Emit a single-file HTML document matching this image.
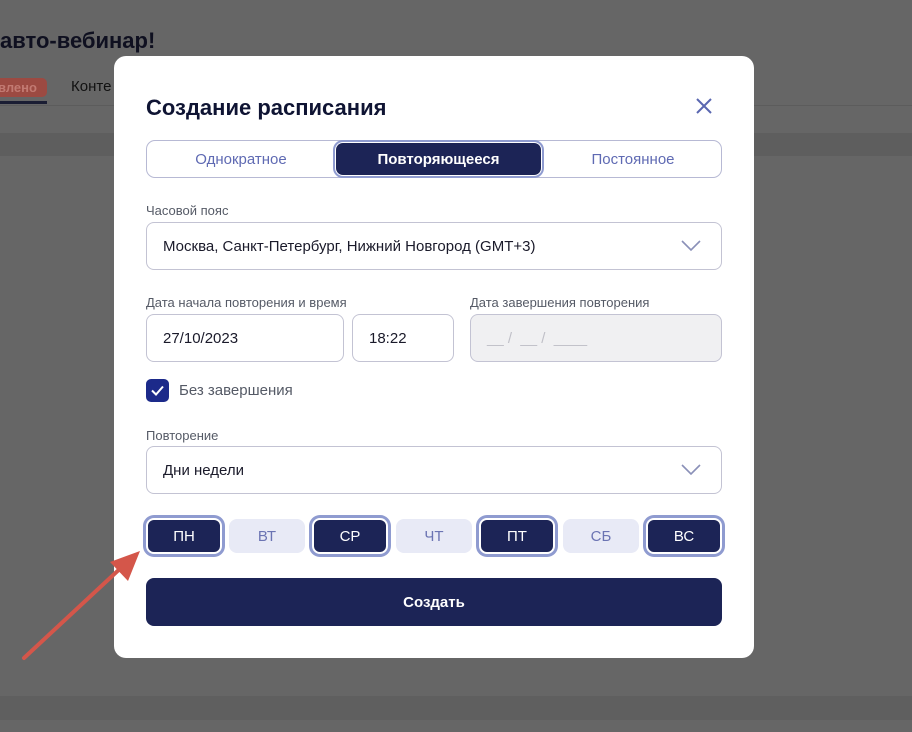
<!DOCTYPE html>
<html><head><meta charset="utf-8"><style>
*{box-sizing:border-box;margin:0;padding:0}
body{width:912px;height:732px;background:#666;font-family:"Liberation Sans",sans-serif;position:relative;overflow:hidden}
.a{position:absolute}
.lbl{position:absolute;font-size:13px;color:#555a66}
.inp{position:absolute;border:1px solid #c3c3d3;border-radius:8px;background:#fff;font-size:15px;color:#1a1a2a;display:flex;align-items:center;padding-left:16px}
.day{position:absolute;top:518px;width:76px;height:36px;border-radius:8px;display:flex;align-items:center;justify-content:center;font-size:15px}
.on{background:#1c2456;color:#fff;box-shadow:0 0 0 1px #1c2456 inset,0 0 0 3px #8f9bd0;border:2px solid #fff;outline:none}
.off{background:#e8eaf6;color:#6b74b3;top:519px;height:34px}
.chev{position:absolute;right:20px;top:50%;margin-top:-6px}
</style></head><body>
<div class="a" style="left:0;top:28px;font-size:22px;font-weight:bold;color:#0f1020">авто-вебинар!</div>
<div class="a" style="left:-10px;top:78px;width:57px;height:19px;background:#9c4a42;border-radius:5px;color:#c27a72;font-size:13px;font-weight:bold;padding-left:8px;line-height:19px">влено</div>
<div class="a" style="left:71px;top:78px;font-size:15px;color:#111">Конте</div>
<div class="a" style="left:0;top:101px;width:47px;height:3px;background:#1a1d33"></div>
<div class="a" style="left:0;top:105px;width:912px;height:1px;background:#5c5c5c"></div>
<div class="a" style="left:0;top:133px;width:912px;height:23px;background:#5e5e5e"></div>
<div class="a" style="left:0;top:696px;width:912px;height:24px;background:#5f5f5f"></div>

<div class="a" style="left:114px;top:56px;width:640px;height:602px;background:#fff;border-radius:12px"></div>
<div class="a" style="left:146px;top:95px;font-size:22px;font-weight:bold;color:#0f1433">Создание расписания</div>
<svg class="a" style="left:694px;top:96px" width="20" height="20" viewBox="0 0 20 20"><path d="M3 3L17 17M17 3L3 17" stroke="#5a67b0" stroke-width="2"/></svg>

<div class="a" style="left:146px;top:140px;width:576px;height:38px;border:1px solid #b7b9d4;border-radius:9px"></div>
<div class="a" style="left:146px;top:140px;width:190px;height:38px;display:flex;align-items:center;justify-content:center;font-size:15px;color:#5f6ab3">Однократное</div>
<div class="a" style="left:333px;top:140px;width:211px;height:38px;border:2px solid #8f9bd0;border-radius:10px;background:#fff;padding:1px"><div style="width:100%;height:100%;background:#1c2456;border-radius:7px;color:#fff;font-size:15px;font-weight:bold;display:flex;align-items:center;justify-content:center">Повторяющееся</div></div>
<div class="a" style="left:544px;top:140px;width:178px;height:38px;display:flex;align-items:center;justify-content:center;font-size:15px;color:#5f6ab3">Постоянное</div>

<div class="lbl" style="left:146px;top:203px">Часовой пояс</div>
<div class="inp" style="left:146px;top:222px;width:576px;height:48px">Москва, Санкт-Петербург, Нижний Новгород (GMT+3)<svg class="chev" width="20" height="12" viewBox="0 0 20 12"><path d="M1 1L10 10L19 1" fill="none" stroke="#8a90b8" stroke-width="1.6"/></svg></div>

<div class="lbl" style="left:146px;top:295px">Дата начала повторения и время</div>
<div class="lbl" style="left:470px;top:295px">Дата завершения повторения</div>
<div class="inp" style="left:146px;top:314px;width:198px;height:48px">27/10/2023</div>
<div class="inp" style="left:352px;top:314px;width:102px;height:48px">18:22</div>
<div class="inp" style="left:470px;top:314px;width:252px;height:48px;background:#f0f0f2;color:#c0c0c8">__ / &nbsp;__ / &nbsp;____</div>

<div class="a" style="left:146px;top:379px;width:23px;height:23px;background:#1c2a8a;border-radius:5px"><svg width="23" height="23" viewBox="0 0 23 23"><path d="M6 11.5L10 15.5L17 7.5" fill="none" stroke="#fff" stroke-width="2"/></svg></div>
<div class="a" style="left:179px;top:382px;font-size:15px;color:#555a66">Без завершения</div>

<div class="lbl" style="left:146px;top:428px">Повторение</div>
<div class="inp" style="left:146px;top:446px;width:576px;height:48px">Дни недели<svg class="chev" width="20" height="12" viewBox="0 0 20 12"><path d="M1 1L10 10L19 1" fill="none" stroke="#8a90b8" stroke-width="1.6"/></svg></div>

<div class="day on" style="left:146px">ПН</div>
<div class="day off" style="left:229px">ВТ</div>
<div class="day on" style="left:312px">СР</div>
<div class="day off" style="left:396px">ЧТ</div>
<div class="day on" style="left:479px">ПТ</div>
<div class="day off" style="left:563px">СБ</div>
<div class="day on" style="left:646px">ВС</div>

<div class="a" style="left:146px;top:578px;width:576px;height:48px;background:#1c2456;border-radius:8px;color:#fff;font-size:15px;font-weight:bold;display:flex;align-items:center;justify-content:center">Создать</div>

<svg class="a" style="left:0;top:540px" width="160" height="130" viewBox="0 0 160 130"><path d="M24 118L124 25" stroke="#d4564a" stroke-width="4" stroke-linecap="round"/><path d="M140 11L110 22L128 41Z" fill="#d4564a"/></svg>
</body></html>
